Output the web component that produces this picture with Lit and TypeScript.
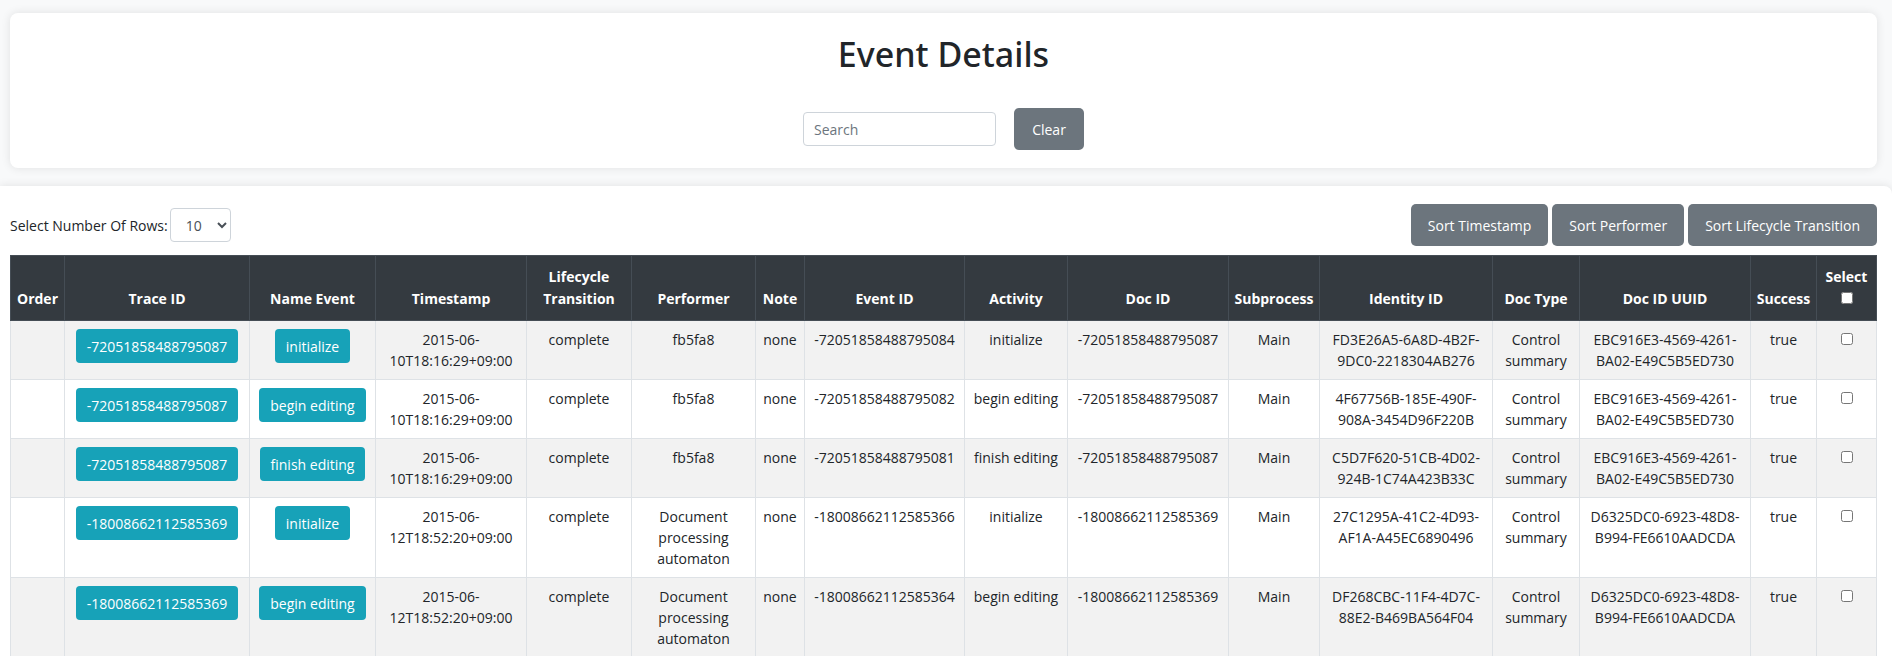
import { LitElement, html, css } from "lit";
import { customElement, state } from "lit/decorators.js";

interface EventRow {
  traceId: string;
  name: string;
  timestamp: string;
  lifecycle: string;
  performer: string;
  note: string;
  eventId: string;
  docId: string;
  subprocess: string;
  identityId: string;
  docType: string;
  docUuid: string;
  success: string;
}

const base = {
  lifecycle: "complete",
  note: "none",
  subprocess: "Main",
  docType: "Control summary",
  success: "true",
};

const first = {
  ...base,
  traceId: "-72051858488795087",
  docId: "-72051858488795087",
  timestamp: "2015-06-10T18:16:29+09:00",
  performer: "fb5fa8",
  docUuid: "EBC916E3-4569-4261-BA02-E49C5B5ED730",
};

const second = {
  ...base,
  traceId: "-18008662112585369",
  docId: "-18008662112585369",
  timestamp: "2015-06-12T18:52:20+09:00",
  performer: "Document processing automaton",
  docUuid: "D6325DC0-6923-48D8-B994-FE6610AADCDA",
};

const ROWS: EventRow[] = [
  { ...first, name: "initialize", eventId: "-72051858488795084", identityId: "FD3E26A5-6A8D-4B2F-9DC0-2218304AB276" },
  { ...first, name: "begin editing", eventId: "-72051858488795082", identityId: "4F67756B-185E-490F-908A-3454D96F220B" },
  { ...first, name: "finish editing", eventId: "-72051858488795081", identityId: "C5D7F620-51CB-4D02-924B-1C74A423B33C" },
  { ...second, name: "initialize", eventId: "-18008662112585366", identityId: "27C1295A-41C2-4D93-AF1A-A45EC6890496" },
  { ...second, name: "begin editing", eventId: "-18008662112585364", identityId: "DF268CBC-11F4-4D7C-88E2-B469BA564F04" },
];

const COLUMNS: [string, number][] = [
  ["Order", 54],
  ["Trace ID", 185],
  ["Name Event", 126],
  ["Timestamp", 151],
  ["Lifecycle Transition", 105],
  ["Performer", 124],
  ["Note", 49],
  ["Event ID", 160],
  ["Activity", 103],
  ["Doc ID", 161],
  ["Subprocess", 91],
  ["Identity ID", 173],
  ["Doc Type", 87],
  ["Doc ID UUID", 171],
  ["Success", 66],
];

const SELECT_WIDTH = 60;

@customElement("app-root")
export class AppRoot extends LitElement {
  @state() private query = "";
  @state() private rows: EventRow[] = ROWS;

  static styles = css`
    :host {
      display: block;
      height: 100vh;
      overflow-y: auto;
      scrollbar-width: none;
      background: #f8f9fa;
      color: #212529;
      font: 14px/21px "Segoe UI", "Open Sans", "Noto Sans", sans-serif;
    }
    *,
    *::before,
    *::after {
      box-sizing: border-box;
    }
    .card {
      display: flex;
      flex-direction: column;
      align-items: center;
      gap: 32px;
      margin: 13px 15px 18px 10px;
      padding: 20px;
      padding-bottom: 18px;
      background: #fff;
      border-radius: 8px;
      box-shadow: 0 0 10px rgba(0, 0, 0, 0.1);
    }
    .title {
      margin: 0;
      font-family: "Segoe UI", "Noto Sans", sans-serif;
      font-size: 34px;
      line-height: 43px;
      font-weight: 500;
    }
    .search-row {
      display: flex;
      align-items: center;
      gap: 18px;
    }
    .control {
      height: 34px;
      border: 1px solid #ced4da;
      border-radius: 4px;
      background: #fff;
      color: #495057;
      font: inherit;
    }
    .search {
      width: 193px;
      padding: 6px 10px;
    }
    .search::placeholder {
      color: #6c757d;
      opacity: 1;
    }
    .rows {
      width: 61px;
      padding: 0 0 0 11px;
    }
    .btn {
      min-width: 70px;
      height: 42px;
      padding: 0 17px;
      border: 0;
      border-radius: 5px;
      background: #6c757d;
      color: #fff;
      font: inherit;
      white-space: nowrap;
      cursor: pointer;
    }
    .btn.info {
      height: 34px;
      padding: 0 11px;
      border-radius: 4px;
      background: #17a2b8;
    }
    .panel {
      min-height: 470px;
      padding: 18px 15px 0 10px;
      background: #fff;
      border-radius: 0 8px 0 0;
      box-shadow: 0 0 10px rgba(0, 0, 0, 0.1);
    }
    .toolbar {
      display: flex;
      justify-content: space-between;
      align-items: center;
      flex-wrap: wrap;
      margin-bottom: 9px;
    }
    .row-count,
    .sorts {
      display: flex;
      align-items: center;
      gap: 4px;
    }
    .row-count {
      gap: 2px;
    }
    .events {
      width: 100%;
      table-layout: fixed;
      border-collapse: collapse;
      text-align: center;
    }
    .head {
      padding: 10px 4px;
      border: 1px solid #454d55;
      background: #343a40;
      color: #fff;
      line-height: 22px;
      font-weight: 700;
      vertical-align: bottom;
    }
    .cell {
      padding: 8px 4px;
      border: 1px solid #dee2e6;
      vertical-align: top;
    }
    .row:nth-child(odd) {
      background: #f2f2f2;
    }
    .pad {
      padding-left: 16px;
      padding-right: 16px;
    }
    .check {
      display: block;
      width: 12px;
      height: 12px;
      margin: 4px auto 0;
    }
    .head .check {
      margin: 4px auto 6px;
    }
  `;

  private sortBy(key: keyof EventRow) {
    this.rows = [...this.rows].sort((a, b) => a[key].localeCompare(b[key]));
  }

  render() {
    const shown = this.rows.filter((r) => Object.values(r).join(" ").includes(this.query));
    return html`
      <header class="card">
        <h1 class="title">Event Details</h1>
        <div class="search-row">
          <input
            class="control search"
            type="text"
            placeholder="Search"
            aria-label="Search"
            .value=${this.query}
            @input=${(e: Event) => (this.query = (e.target as HTMLInputElement).value)}
          />
          <button class="btn" type="button" @click=${() => (this.query = "")}>Clear</button>
        </div>
      </header>
      <main class="panel">
        <div class="toolbar">
          <div class="row-count">
            <label for="rows">Select Number Of Rows:</label>
            <select class="control rows" id="rows">
              <option>10</option>
              <option>25</option>
              <option>50</option>
            </select>
          </div>
          <div class="sorts">
            <button class="btn" type="button" @click=${() => this.sortBy("timestamp")}>Sort Timestamp</button>
            <button class="btn" type="button" @click=${() => this.sortBy("performer")}>Sort Performer</button>
            <button class="btn" type="button" @click=${() => this.sortBy("lifecycle")}>Sort Lifecycle Transition</button>
          </div>
        </div>
        <table class="events">
          <colgroup>
            ${COLUMNS.map(([, width]) => html`<col style="width:${width}px" />`)}
            <col style="width:${SELECT_WIDTH}px" />
          </colgroup>
          <thead>
            <tr>
              ${COLUMNS.map(([label]) => html`<th class="head" scope="col">${label}</th>`)}
              <th class="head" scope="col">
                <label for="all">Select</label>
                <input class="check" id="all" type="checkbox" />
              </th>
            </tr>
          </thead>
          <tbody>
            ${shown.map(
              (r) => html`
                <tr class="row">
                  <td class="cell"></td>
                  <td class="cell"><button class="btn info" type="button">${r.traceId}</button></td>
                  <td class="cell"><button class="btn info" type="button">${r.name}</button></td>
                  <td class="cell">${r.timestamp}</td>
                  <td class="cell">${r.lifecycle}</td>
                  <td class="cell pad">${r.performer}</td>
                  <td class="cell">${r.note}</td>
                  <td class="cell">${r.eventId}</td>
                  <td class="cell">${r.name}</td>
                  <td class="cell">${r.docId}</td>
                  <td class="cell">${r.subprocess}</td>
                  <td class="cell">${r.identityId}</td>
                  <td class="cell">${r.docType}</td>
                  <td class="cell">${r.docUuid}</td>
                  <td class="cell">${r.success}</td>
                  <td class="cell"><input class="check" type="checkbox" aria-label="Select event ${r.eventId}" /></td>
                </tr>
              `
            )}
          </tbody>
        </table>
      </main>
    `;
  }
}
